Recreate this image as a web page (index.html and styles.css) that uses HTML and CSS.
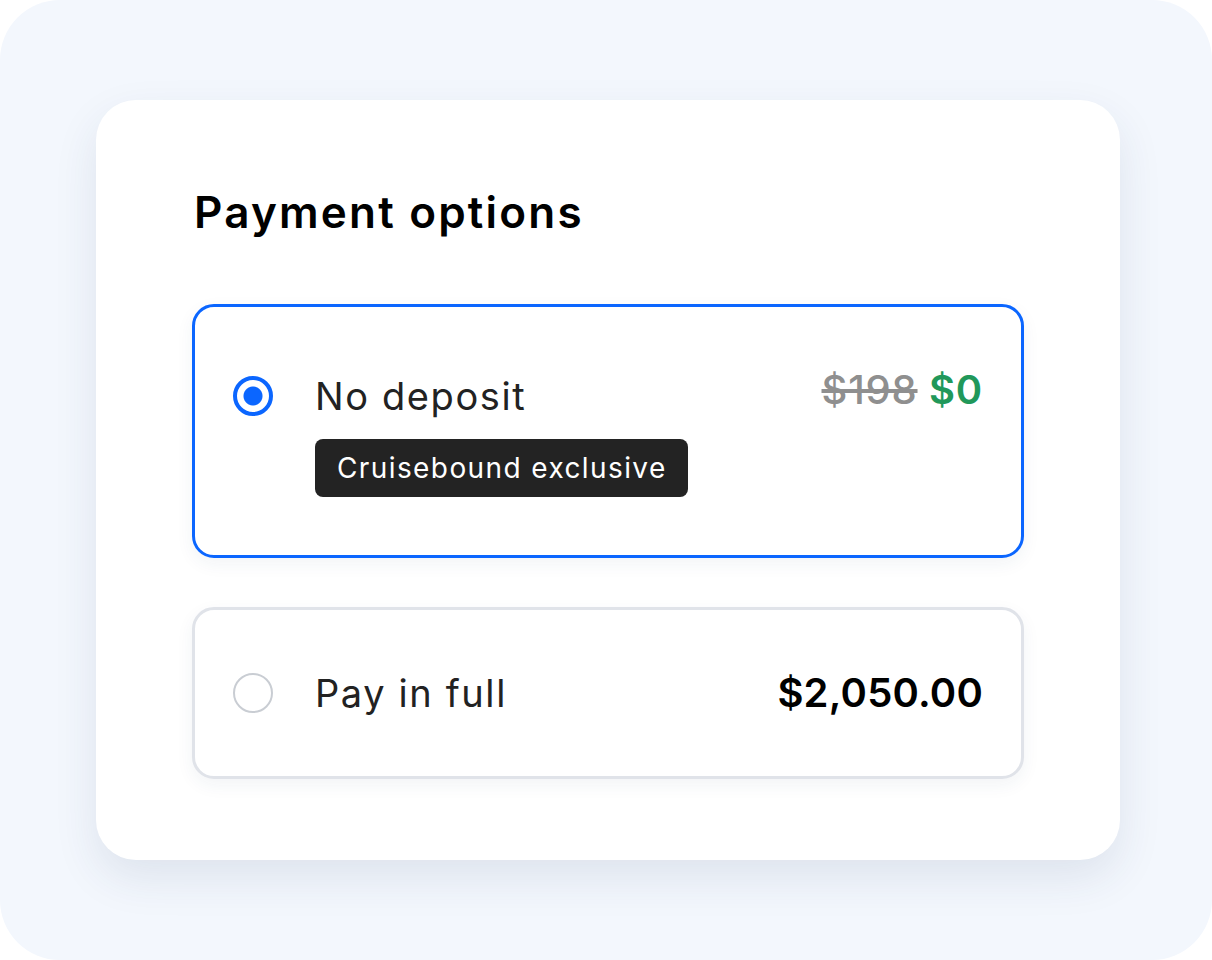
FILE: index.html
```html
<!DOCTYPE html>
<html>
<head>
  <title>Payment options</title>
  <link rel="stylesheet" href="styles.css">
</head>
<body>
  <div class="frame">
    <div class="card">
      <h2>Payment options</h2>

      <div class="option selected">
        <span class="radio"></span>
        <div class="label">
          <div class="name">No deposit</div>
          <span class="badge">Cruisebound exclusive</span>
        </div>
        <div class="price"><s class="old">$198</s> <span class="new">$0</span></div>
      </div>

      <div class="option">
        <span class="radio"></span>
        <div class="label">
          <div class="name">Pay in full</div>
        </div>
        <div class="price total">$2,050.00</div>
      </div>
    </div>
  </div>
</body>
</html>
```

FILE: styles.css
```css
body {
  margin: 0;
  background: #fff;
  font-family: Inter, "Noto Sans", sans-serif;
}
.frame {
  width: 1212px;
  height: 960px;
  box-sizing: border-box;
  padding: 100px 92px 100px 96px;
  background: #f3f7fd;
  border-radius: 60px;
}
.card {
  width: 1024px;
  height: 760px;
  box-sizing: border-box;
  padding: 84px 96px 0 96px;
  background: #fff;
  border-radius: 40px;
  box-shadow: 0 18px 44px rgba(40, 60, 100, 0.10);
}
h2 {
  margin: 0 0 64px 0;
  padding-left: 2px;
  font-size: 44px;
  font-weight: 600;
  line-height: 56px;
  letter-spacing: 2.2px;
  color: #000;
}
.option {
  display: flex;
  align-items: center;
  padding: 0 38px 0 38px;
  height: 172px;
  box-sizing: border-box;
  border: 3px solid #e0e3e9;
  border-radius: 22px;
  box-shadow: 0 6px 18px rgba(40, 60, 100, 0.06);
}
.option.selected {
  align-items: flex-start;
  height: 254px;
  padding-top: 65px;
  margin-bottom: 49px;
  border-color: #0b66ff;
}
.radio {
  width: 40px;
  height: 40px;
  box-sizing: border-box;
  border: 2px solid #c9cdd3;
  border-radius: 50%;
  flex-shrink: 0;
  margin-right: 42px;
}
.selected .radio {
  margin-top: 4px;
  border: 4px solid #0b66ff;
  background: radial-gradient(circle, #0b66ff 0 9px, #fff 10px);
}
.label {
  flex: 1;
}
.name {
  font-size: 38px;
  line-height: 48px;
  letter-spacing: 1.6px;
  color: #222;
}
.badge {
  display: inline-block;
  margin-top: 19px;
  padding: 0 21px 0 22px;
  height: 58px;
  line-height: 58px;
  background: #232323;
  color: #fff;
  font-size: 28px;
  letter-spacing: 1.4px;
  border-radius: 8px;
}
.price {
  font-size: 40px;
  line-height: 48px;
  font-weight: 500;
  letter-spacing: 0.8px;
}
.selected .price {
  margin-top: -6px;
}
.old {
  color: #8f8f8f;
}
.new {
  color: #21985a;
  font-weight: 600;
}
.total {
  color: #000;
  font-weight: 600;
  letter-spacing: 0.2px;
}
```
